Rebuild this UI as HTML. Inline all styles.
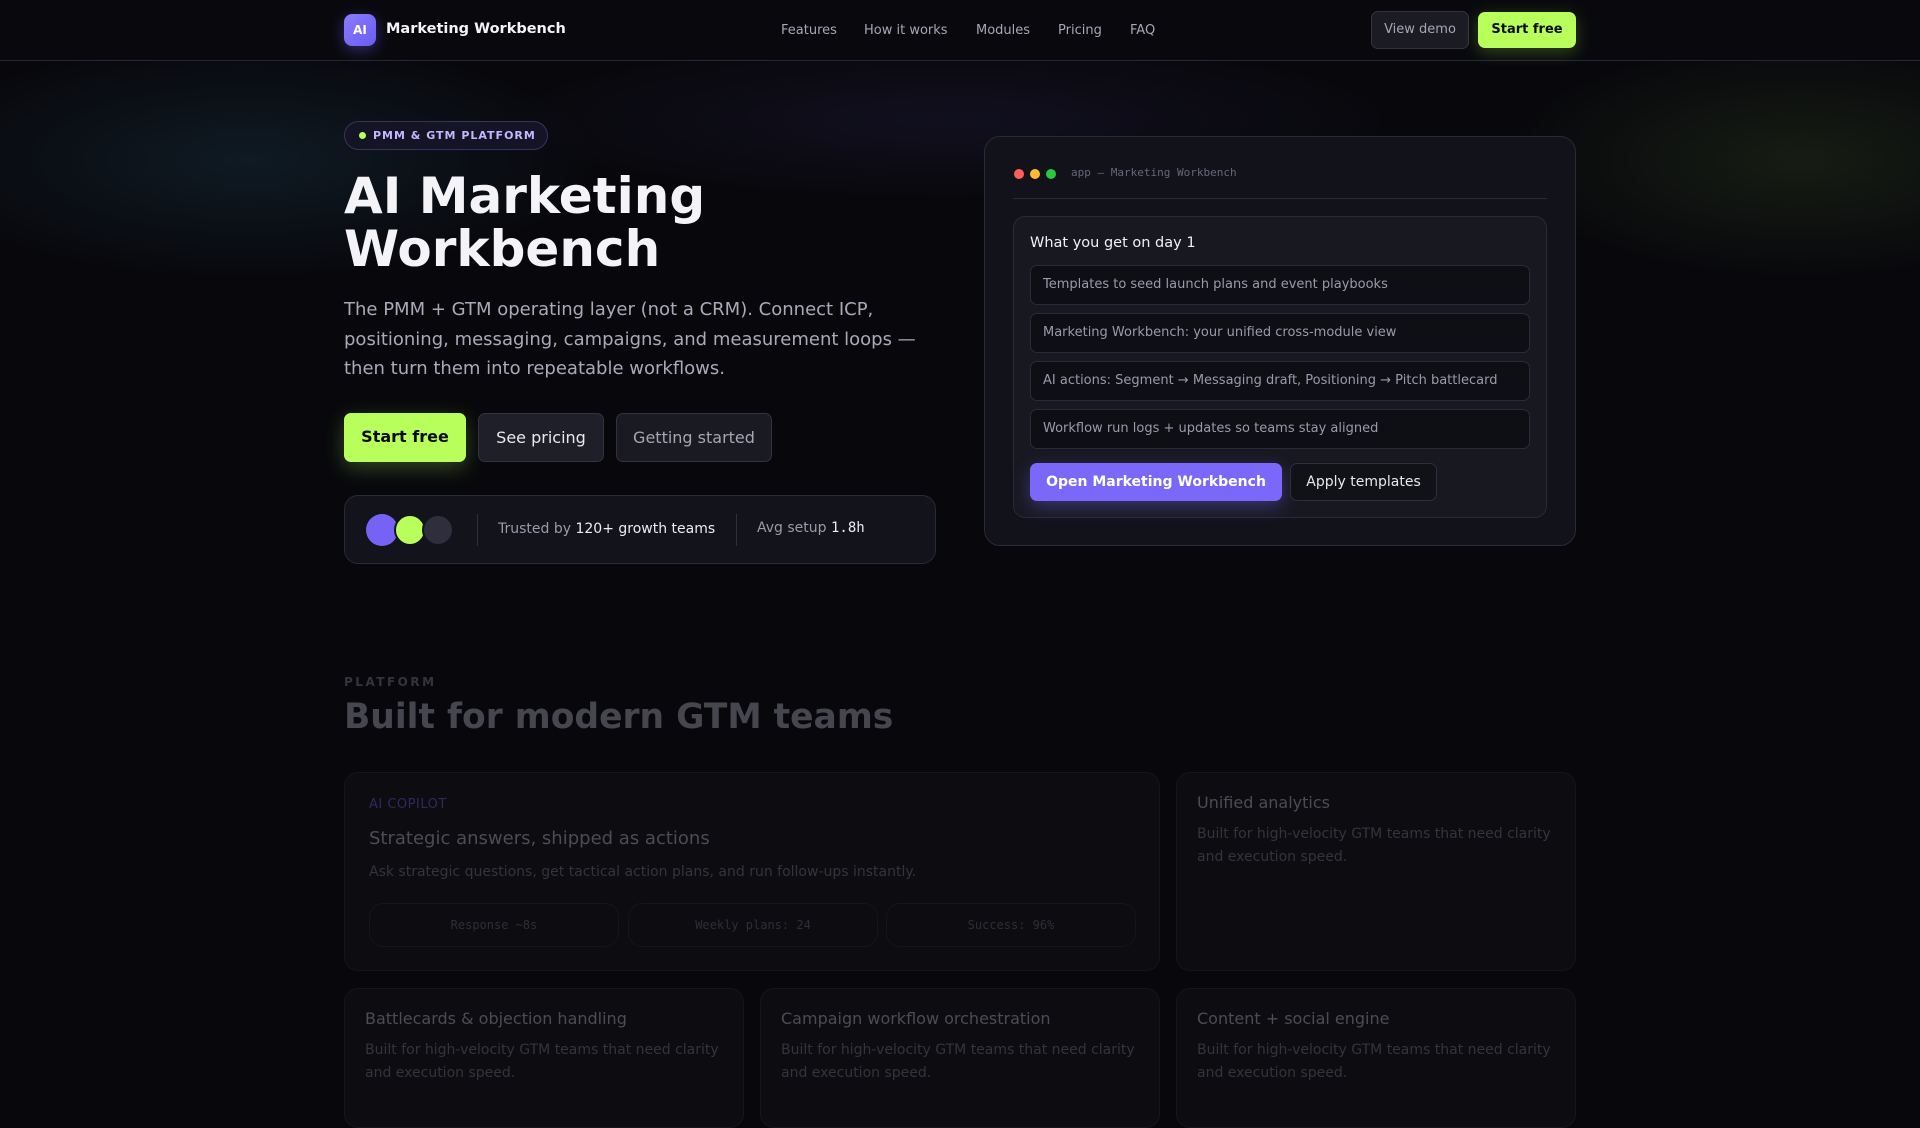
<!DOCTYPE html>
<html><head><meta charset="utf-8"><style>
*{box-sizing:border-box;margin:0;padding:0}
body{width:1920px;height:1080px;overflow:hidden;background:#08080c;font-family:"DejaVu Sans","Liberation Sans",sans-serif;color:#e8e8ee;position:relative}
.a{position:absolute;white-space:nowrap}
.glow1{left:-100px;top:40px;width:700px;height:240px;background:radial-gradient(ellipse at center,rgba(40,90,120,.22),transparent 70%)}
.glow2{left:1500px;top:40px;width:600px;height:240px;background:radial-gradient(ellipse at center,rgba(80,110,50,.2),transparent 70%)}
.glow3{left:500px;top:40px;width:900px;height:160px;background:radial-gradient(ellipse at center,rgba(60,50,120,.18),transparent 70%)}
nav{position:absolute;left:0;top:0;width:1920px;height:61px;border-bottom:1px solid #262636;background:#09090d}
.logo{left:344px;top:14px;width:32px;height:32px;border-radius:8px;background:linear-gradient(135deg,#8b7bff,#6a5cf0);font-size:12px;font-weight:bold;color:#fff;text-align:center;line-height:32px;box-shadow:0 4px 14px rgba(110,90,250,.4)}
.brand{left:386px;top:21px;font-size:14.5px;font-weight:bold;color:#f4f4f8}
.nl{top:23px;font-size:13px;color:#a6a6b4}
.btn{border-radius:7px;text-align:center}
.badge{left:344px;top:121px;width:204px;height:29px;border-radius:15px;border:1px solid #37335e;background:#151427;font-size:11px;font-weight:bold;letter-spacing:1px;color:#c2b8ff;line-height:27px;padding-left:28px}
.badge:before{content:"";position:absolute;left:14px;top:10px;width:7px;height:7px;border-radius:50%;background:#b8ff5c}
h1{position:absolute;left:344px;top:170px;font-size:50px;line-height:53px;font-weight:bold;color:#f4f4f8}
.p{left:344px;top:295px;width:600px;font-size:18px;line-height:29.5px;color:#a9a9b8;white-space:normal}
.b{top:413px;height:49px;font-size:16px;line-height:47px;border-radius:7px;text-align:center}
.card{left:984px;top:136px;width:592px;height:410px;border:1px solid #2a2a38;border-radius:16px;background:#12121b}
.item{position:absolute;left:16px;width:500px;height:40px;border:1px solid #2a2a38;border-radius:7px;background:#0e0e15;font-size:13px;color:#9a9aac;line-height:38px;padding-left:12px}
.fc{border:1px solid #15151c;border-radius:14px;background:#0c0c11}
.ft{font-size:16px;color:#4c4c55}
.fd{font-size:14px;color:#34343c;line-height:23px;white-space:normal}
</style></head><body>
<div class="a glow1"></div><div class="a glow3"></div><div class="a glow2"></div>
<nav>
<div class="a logo">AI</div>
<div class="a brand">Marketing Workbench</div>
<div class="a nl" style="left:781px">Features</div>
<div class="a nl" style="left:864px">How it works</div>
<div class="a nl" style="left:976px">Modules</div>
<div class="a nl" style="left:1058px">Pricing</div>
<div class="a nl" style="left:1130px">FAQ</div>
<div class="a btn" style="left:1371px;top:11px;width:98px;height:38px;border:1px solid #33333f;background:#1b1b24;color:#a6a6b6;font-size:13px;line-height:36px">View demo</div>
<div class="a btn" style="left:1478px;top:12px;width:98px;height:36px;background:#b8ff5c;color:#0c0c10;font-weight:bold;font-size:13px;line-height:36px;box-shadow:0 4px 16px rgba(184,255,92,.25)">Start free</div>
</nav>
<div class="badge a">PMM &amp; GTM PLATFORM</div>
<h1>AI Marketing<br>Workbench</h1>
<div class="a p">The PMM + GTM operating layer (not a CRM). Connect ICP, positioning, messaging, campaigns, and measurement loops — then turn them into repeatable workflows.</div>
<div class="a b" style="left:344px;width:122px;background:#b8ff5c;color:#0c0c10;font-weight:bold;box-shadow:0 6px 20px rgba(184,255,92,.25)">Start free</div>
<div class="a b" style="left:478px;width:126px;background:#1f1f29;border:1px solid #33333f;color:#e8e8ee">See pricing</div>
<div class="a b" style="left:616px;width:156px;background:#1a1a22;border:1px solid #33333f;color:#a6a6b6">Getting started</div>
<div class="a" style="left:344px;top:495px;width:592px;height:69px;border:1px solid #2a2a38;border-radius:14px;background:#13131c">
<div class="a" style="left:21px;top:18px;width:32px;height:32px;border-radius:50%;background:#7663f5"></div>
<div class="a" style="left:49px;top:18px;width:32px;height:32px;border-radius:50%;background:#b8ff5c;border:2px solid #13131c"></div>
<div class="a" style="left:77px;top:18px;width:32px;height:32px;border-radius:50%;background:#2e2e3c;border:2px solid #13131c"></div>
<div class="a" style="left:132px;top:18px;width:1px;height:32px;background:#2e2e3c"></div>
<div class="a" style="left:153px;top:25px;font-size:14px;color:#9a9aaa">Trusted by <span style="color:#ececf2">120+ growth teams</span></div>
<div class="a" style="left:391px;top:18px;width:1px;height:32px;background:#2e2e3c"></div>
<div class="a" style="left:412px;top:24px;font-size:14px;color:#9a9aaa">Avg setup <span style="color:#ececf2;font-family:'DejaVu Sans Mono',monospace">1.8h</span></div>
</div>
<div class="a card">
<div class="a" style="left:29px;top:32px;width:10px;height:10px;border-radius:50%;background:#ff5f57"></div>
<div class="a" style="left:45px;top:32px;width:10px;height:10px;border-radius:50%;background:#febc2e"></div>
<div class="a" style="left:61px;top:32px;width:10px;height:10px;border-radius:50%;background:#28c840"></div>
<div class="a" style="left:86px;top:29px;font-family:'DejaVu Sans Mono',monospace;font-size:11px;color:#66667a">app — Marketing Workbench</div>
<div class="a" style="left:28px;top:61px;width:534px;height:1px;background:#2a2a38"></div>
<div class="a" style="left:28px;top:79px;width:534px;height:302px;border:1px solid #2a2a38;border-radius:12px;background:#181821">
<div class="a" style="left:16px;top:18px;font-size:14.5px;color:#f0f0f4">What you get on day 1</div>
<div class="item" style="top:48px">Templates to seed launch plans and event playbooks</div>
<div class="item" style="top:96px">Marketing Workbench: your unified cross-module view</div>
<div class="item" style="top:144px">AI actions: Segment → Messaging draft, Positioning → Pitch battlecard</div>
<div class="item" style="top:192px">Workflow run logs + updates so teams stay aligned</div>
<div class="a btn" style="left:16px;top:246px;width:252px;height:38px;background:#7b68fb;color:#fff;font-weight:bold;font-size:14px;line-height:38px;box-shadow:0 6px 18px rgba(123,104,251,.35)">Open Marketing Workbench</div>
<div class="a btn" style="left:276px;top:246px;width:147px;height:38px;border:1px solid #2e2e3c;background:#111118;color:#e8e8ee;font-size:14px;line-height:36px">Apply templates</div>
</div>
</div>
<div class="a" style="left:344px;top:675px;font-size:12px;font-weight:bold;letter-spacing:2.5px;color:#34343c">PLATFORM</div>
<div class="a" style="left:344px;top:697px;font-size:34.5px;font-weight:bold;color:#46464e">Built for modern GTM teams</div>
<div class="a fc" style="left:344px;top:772px;width:816px;height:199px">
<div class="a" style="left:24px;top:24px;font-size:13px;letter-spacing:.5px;color:#2f2a5c">AI COPILOT</div>
<div class="a ft" style="left:24px;top:55px;font-size:18px">Strategic answers, shipped as actions</div>
<div class="a fd" style="left:24px;top:88px">Ask strategic questions, get tactical action plans, and run follow-ups instantly.</div>
<div class="a fc" style="left:24px;top:130px;width:250px;height:44px;text-align:center;line-height:42px;font-family:'DejaVu Sans Mono',monospace;font-size:12px;color:#2e2e36">Response ~8s</div>
<div class="a fc" style="left:283px;top:130px;width:250px;height:44px;text-align:center;line-height:42px;font-family:'DejaVu Sans Mono',monospace;font-size:12px;color:#2e2e36">Weekly plans: 24</div>
<div class="a fc" style="left:541px;top:130px;width:250px;height:44px;text-align:center;line-height:42px;font-family:'DejaVu Sans Mono',monospace;font-size:12px;color:#2e2e36">Success: 96%</div>
</div>
<div class="a fc" style="left:1176px;top:772px;width:400px;height:199px">
<div class="a ft" style="left:20px;top:20px">Unified analytics</div>
<div class="a fd" style="left:20px;top:50px;width:370px">Built for high-velocity GTM teams that need clarity and execution speed.</div>
</div>
<div class="a fc" style="left:344px;top:988px;width:400px;height:140px">
<div class="a ft" style="left:20px;top:20px">Battlecards &amp; objection handling</div>
<div class="a fd" style="left:20px;top:50px;width:370px">Built for high-velocity GTM teams that need clarity and execution speed.</div>
</div>
<div class="a fc" style="left:760px;top:988px;width:400px;height:140px">
<div class="a ft" style="left:20px;top:20px">Campaign workflow orchestration</div>
<div class="a fd" style="left:20px;top:50px;width:370px">Built for high-velocity GTM teams that need clarity and execution speed.</div>
</div>
<div class="a fc" style="left:1176px;top:988px;width:400px;height:140px">
<div class="a ft" style="left:20px;top:20px">Content + social engine</div>
<div class="a fd" style="left:20px;top:50px;width:370px">Built for high-velocity GTM teams that need clarity and execution speed.</div>
</div>
</body></html>
